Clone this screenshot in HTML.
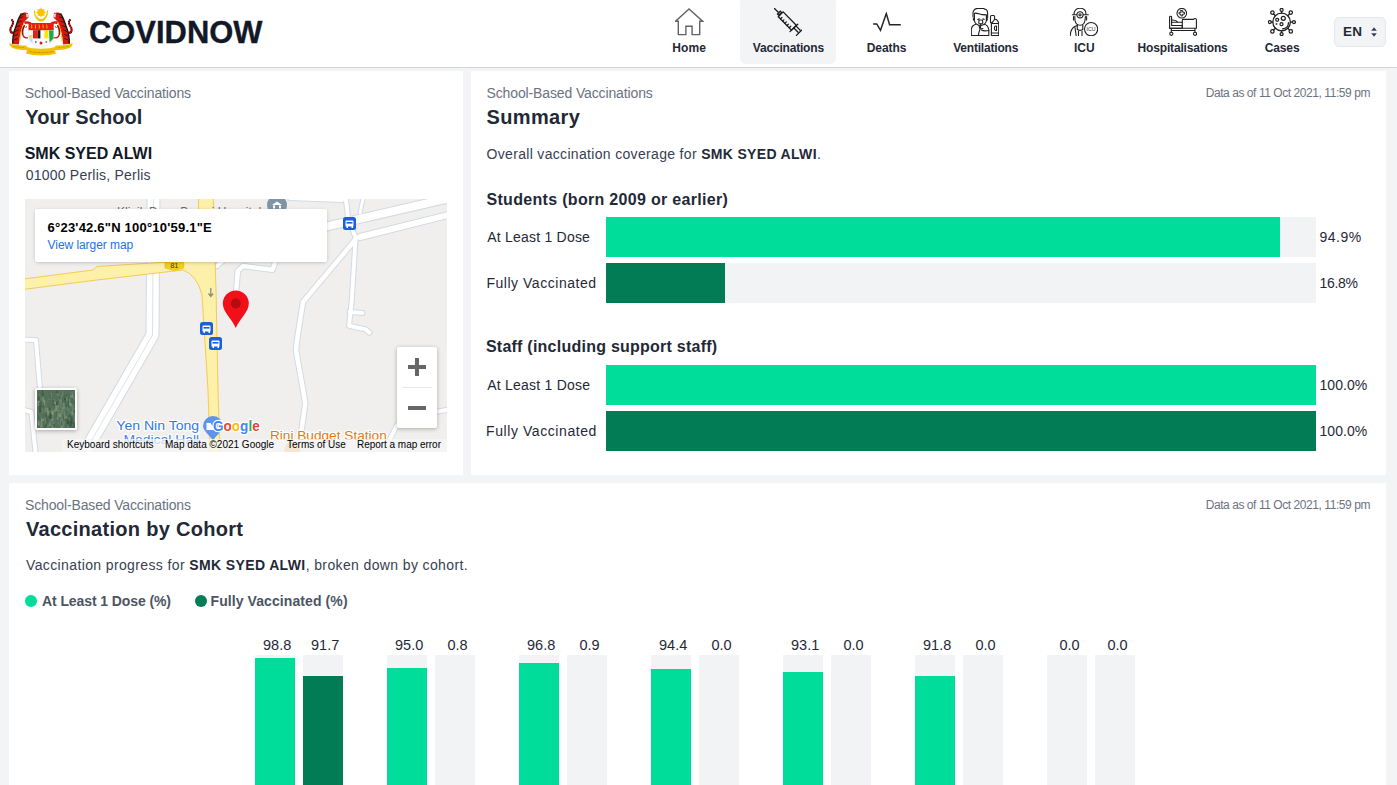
<!DOCTYPE html>
<html><head><meta charset="utf-8"><title>COVIDNOW</title>
<style>
html,body{margin:0;padding:0;width:1397px;height:785px;overflow:hidden;background:#f3f4f6;font-family:"Liberation Sans",sans-serif;}
.t{position:absolute;line-height:1;white-space:nowrap;}
.a{position:absolute;}
.g1{background:#00dd9b}
.g2{background:#027c55}
.tr{background:#f2f3f5}
</style></head><body>
<div class="a" style="left:0;top:0;width:1397px;height:67px;background:#fff"></div>
<div class="a" style="left:0;top:67px;width:1397px;height:1px;background:#d1d5db"></div>
<div class="a" style="left:740px;top:-3px;width:96px;height:67px;background:#f3f4f6;border-radius:6px"></div>
<div class="a" style="left:1334px;top:17px;width:50px;height:28px;border:1px solid #e5e7eb;background:#f3f4f6;border-radius:5px"></div>
<svg class="a" style="left:1370px;top:26px" width="8" height="12" viewBox="0 0 8 12"><path d="M1.2 4.8 L4 1.2 L6.8 4.8Z M1.2 7.2 L4 10.8 L6.8 7.2Z" fill="#374151"/></svg>
<svg class="a" style="left:5px;top:5px" width="75" height="55" viewBox="5 5 75 55">
<defs>
<g id="tg">
<path d="M11.5,19.5 C13.8,21.5 13.5,23.5 11.8,26 C10,28.5 10,31 11.5,32.8 L14,32.4" fill="none" stroke="#e01a12" stroke-width="2"/>
<path d="M11.5,19.5 C13.8,21.5 13.5,23.5 11.8,26 C10,28.5 10,31 11.5,32.8 L14,32.4" fill="none" stroke="#1a1a1a" stroke-width="2" stroke-dasharray="0.9 1.3"/>
<path d="M12.7,43.7 C12.5,38 14,31 16,26 C17.5,21.5 19.5,16 21.5,13.5 C23,12.3 26,12.2 28,13 L28.5,17.5 L26.5,19.5 L24,22 C22.5,26 20.5,32 19.8,37 C19.5,40 19.2,42 18.8,44.5 Z" fill="#d9170f"/>
<path d="M12.7,43.7 C12.5,38 14,31 16,26 C17.5,21.5 19.5,16 21.5,13.5" fill="none" stroke="#1a1a1a" stroke-width="1.4"/>
<path d="M14,40 L17.5,38.5 M14.2,36 L18,34 M15,31.5 L18.8,29.8 M16.2,27 L20,25.5 M17.8,22.5 L21.5,21 M19.5,18 L23,16.8 M21.5,14.5 L24.5,13.8" stroke="#1a1a1a" stroke-width="0.9"/>
<path d="M26,13.5 L28.3,14 L28.3,17 L26.5,17.5 Z" fill="#d9d9d9"/>
<path d="M19.8,41 C20.3,34 22,27.5 24.3,22.5" fill="none" stroke="#f5c400" stroke-width="1"/>
<path d="M24,21.5 C26,21 29,21.3 31.5,22.8 L31,24.5 C29,23.6 27,23.5 25,24.2 Z" fill="#e01a12"/>
<path d="M24.8,25.5 C23,28 22.4,32 23,35 C23.6,37.3 25.6,38.2 28,37.6" fill="none" stroke="#e01a12" stroke-width="1.3"/>
<path d="M24.5,25 C22.5,28 21.8,32 22.5,35 M25.5,27.5 L27,26.5" fill="none" stroke="#1a1a1a" stroke-width="0.8"/>
</g>
</defs>
<use href="#tg"/>
<use href="#tg" transform="translate(82,0) scale(-1,1)"/>
<!-- crescent & sun -->
<path d="M33.8,10.5 A7.2,11 0 0 0 48.2,10.5 L47,10.5 A6,8.6 0 0 1 35,10.5 Z" fill="#f2c200"/>
<circle cx="41" cy="12.5" r="3.8" fill="#f7c600"/>
<g stroke="#f7c600" stroke-width="0.8">
<path d="M41,7.5 V17.5 M36,12.5 H46 M37.5,9 L44.5,16 M44.5,9 L37.5,16"/>
</g>
<!-- shield -->
<path d="M28.5,30 H53.7 V38.5 L51,43 L41,47.5 L31,43 L28.5,38.5 Z" fill="#fbfbfb" stroke="#dcdcdc" stroke-width="0.4"/>
<rect x="28.5" y="23" width="25.2" height="7.2" fill="#f01a14"/>
<g fill="#e8b800"><path d="M31,23.5 l1.2,2 v3 h-1 v-3z M34.8,23.5 l1.2,2 v3 h-1 v-3z M38.6,23.5 l1.2,2 v3 h-1 v-3z M42.4,23.5 l1.2,2 v3 h-1 v-3z M46.2,23.5 l1.2,2 v3 h-1 v-3z"/></g>
<rect x="33" y="30.2" width="4.6" height="8.2" fill="#f01a14"/>
<rect x="37.6" y="30.2" width="2.8" height="8.2" fill="#1b1b1b"/>
<rect x="44.4" y="30.2" width="4" height="8.2" fill="#ffe500"/>
<path d="M49,30.5 H53.5 V38.5 L49.5,42.5 Z" fill="#1ea84a"/>
<path d="M29,35 H32.5 V38 H29 Z" fill="#f2dc40"/>
<path d="M29,38.3 H32.5 V43 L30,40.5 Z" fill="#bcdcf2"/>
<circle cx="41" cy="43" r="1.5" fill="#e01818"/>
<circle cx="35.8" cy="42" r="0.9" fill="#3a7ad0"/>
<circle cx="46.3" cy="42" r="0.9" fill="#8a7a5a"/>
<!-- ribbon -->
<path d="M9,43 C13,44.5 20,46 26.5,45.5 L27.5,50 C20,50.5 13,49 10.5,46.5 Z" fill="#f2c200"/>
<path d="M73,43 C69,44.5 62,46 55.5,45.5 L54.5,50 C62,50.5 69,49 71.5,46.5 Z" fill="#f2c200"/>
<path d="M25.5,46.5 C27,49 27,51 26,53.5 C33,56 49,56 56,53.5 C55,51 55,49 56.5,46.5 C49,49.5 33,49.5 25.5,46.5 Z" fill="#f2c200"/>
<path d="M29,51.5 C36,53 46,53 53,51.5" stroke="#8a6d00" stroke-width="0.6" stroke-dasharray="0.8 0.5" fill="none"/>
<path d="M13,46 C16,47 20,47.5 24,47.5 M69,46 C66,47 62,47.5 58,47.5" stroke="#8a6d00" stroke-width="0.5" stroke-dasharray="0.8 0.5" fill="none"/>
</svg>

<div class="t" style="left:89.3px;top:15.9px;font-size:32px;font-weight:700;color:#111827;transform:scaleX(0.966);transform-origin:0 0;-webkit-text-stroke:0.35px #111827">COVIDNOW</div>
<svg class="a" style="left:675px;top:8px" width="29" height="28" viewBox="675 8 29 28" fill="none" stroke="#636363" stroke-width="1.4" stroke-linejoin="miter">
<path d="M689,9 L675.6,21.2 L678.3,21.2 L678.3,34.6 L685.9,34.6 L685.9,26.3 L692.1,26.3 L692.1,34.6 L699.7,34.6 L699.7,21.2 L702.6,21.2 Z"/>
</svg>
<svg class="a" style="left:774px;top:8px" width="28" height="28" viewBox="0 0 28 28" fill="none" stroke="#1a1a1a" stroke-width="1.3" stroke-linecap="round">
<path d="M0.3,0.3 L4.3,4.3"/>
<path d="M3.5,6 L6.3,3.2 L7.6,4.5 L4.8,7.3 Z"/>
<path d="M9.1,3.9 L4.3,8.7 L17.4,22.1 L22.3,17.3 Z"/>
<path d="M16,23.6 L23.8,16.2"/>
<path d="M19.8,20 L24.1,24.3 M21.9,17.9 L26.2,22.2"/>
<path d="M22.4,27.4 L27.6,22.2"/>
<path d="M6.5,10.9 L7.9,9.5 M8.7,13.1 L9.9,11.9 M10.9,15.3 L12.3,13.9 M13.1,17.5 L14.3,16.3 M15.3,19.7 L16.7,18.3"/>
</svg>
<svg class="a" style="left:872px;top:12px" width="30" height="20" viewBox="872 12 30 20" fill="none" stroke="#262626" stroke-width="1.5" stroke-linejoin="miter">
<path d="M873.1,23.9 L876.7,23.9 L880.5,30.3 L886.3,13.6 L889.6,24.8 L900.8,24.8"/>
</svg>
<svg class="a" style="left:971px;top:8px" width="28" height="28" viewBox="0 0 28 28" fill="none" stroke="#1f1f1f" stroke-width="1.1" stroke-linecap="round" stroke-linejoin="round">
<path d="M2,9 L2,4.5 C2.5,2 4,0.4 7,0.4 L12.3,0.3 C13,0.6 13.5,1 14.3,1.2 C16,1.6 16.6,3 16.6,5 L16.6,9.5"/>
<path d="M3.4,9.5 L3.4,5.3 C6,4.5 8,6.5 11,6.6 L15.4,6.9 L15.4,12 C15.4,15 13,17.5 9.4,17.5 C6,17.5 3.4,15 3.4,12 Z"/>
<path d="M3.4,10 C2,10 2,12.5 3.4,12.5 M15.4,10 C16.8,10 16.8,12.5 15.4,12.5"/>
<path d="M6.8,11.5 L8.2,10.8 M12,10.8 L13.2,11.5"/><path d="M8,12 L11.5,12 L11.8,15.3 C11.8,16 7.8,16 7.8,15.3 Z" fill="#fff"/><path d="M9.8,16 L9.5,20"/>
<path d="M5,16.2 C2,17 0.3,19 0.3,22 L0.3,27.6 L17.8,27.6 L17.8,21.5 C17,18 15,16.5 13.5,16.2"/>
<path d="M8,17.5 L9,21 L12,20.5 M9,21 C8,24 7.5,26 7.3,27.6"/>
<path d="M10.5,22 C12,23 15,23 17.8,22.5"/>
<path d="M20.4,14.6 L20.4,27.2 C20.4,27.5 20.7,27.6 21,27.6 L27.1,27.6 C27.4,27.6 27.7,27.5 27.7,27.2 L27.7,14.6 L25.5,11.5 L23.5,11.5 L21.2,14.6"/>
<path d="M19.5,14.6 L19.5,8.5 C19.5,7.8 20,7.5 20.6,7.5 L22.6,7.5 C23.2,7.5 23.6,7.8 23.6,8.5 L23.6,11.5"/>
<path d="M20.4,25 L27.7,25 M21,15.5 L27.2,15.5"/>
<path d="M24.5,18 C23,18.5 23,22 24.5,22.5 M25.5,18 L25.5,22.5"/>
</svg>
<svg class="a" style="left:1070px;top:8px" width="28" height="28" viewBox="0 0 28 28" fill="none" stroke="#1f1f1f" stroke-width="1.1" stroke-linecap="round" stroke-linejoin="round">
<path d="M4,6.4 C4,2.5 6.5,0.3 10,0.3 C13.5,0.3 16,2.5 16,6.4"/>
<path d="M2.3,6.8 L18.3,6.8"/>
<circle cx="10" cy="6.8" r="3.1" fill="#fff"/>
<circle cx="10" cy="6.8" r="1.1"/>
<path d="M4.8,8.5 L5,12.5 C5.5,15.5 7.5,17.2 10,17.2 C12.5,17.2 14.5,15.5 15,12.5 L15.4,8.5"/>
<path d="M3.5,8.5 L3.5,12 M16.6,8.5 L16.6,12"/>
<path d="M7.3,16.5 L7.3,21.5 L10,22.5 L12.8,21.5 L12.8,16.8"/>
<path d="M7.3,17.5 C3.5,18.5 0.3,22 0.3,27.6 M5,19.5 L6.2,27.6 M8.5,23 L8.5,27.6 M12,23 L12,27.6"/>
<circle cx="21.1" cy="21.1" r="6.6" fill="#fff"/>
<text x="21.1" y="23.3" font-family="Liberation Sans" font-size="6" text-anchor="middle" fill="#1f1f1f" stroke="none" textLength="9" lengthAdjust="spacingAndGlyphs">ICU</text>
</svg>
<svg class="a" style="left:1169px;top:8px" width="28" height="28" viewBox="0 0 28 28" fill="none" stroke="#1f1f1f" stroke-width="1.1" stroke-linecap="round" stroke-linejoin="round">
<circle cx="12.8" cy="5.2" r="4.8"/>
<path d="M11.9,2.5 H13.7 V4.3 H15.5 V6.1 H13.7 V7.9 H11.9 V6.1 H10.1 V4.3 H11.9 Z" stroke-width="1"/>
<path d="M0.6,20.3 L0.6,9 C0.6,8.4 1,8.2 1.6,8.2 C2.2,8.2 2.6,8.4 2.6,9 L2.6,17.5 L13.3,17.5 L13.3,20.3 Z"/>
<path d="M2.6,14.3 L13.3,14.3 M2.6,12 C5,11.8 7.5,12.3 9,14.3"/>
<path d="M13.3,20.3 L13.3,12.3 C13.3,11.8 13.8,11.4 14.3,11.4 L24.5,11.4 C25,10.8 25.6,10.5 26.2,10.5 C26.9,10.5 27.4,11 27.4,11.7 L27.4,20.3 L0.6,20.3"/>
<path d="M2.3,20.5 L2.3,24 M26,20.5 L26,24 M2.3,22.5 L26,22.5"/>
<circle cx="2.3" cy="25.8" r="1.6"/>
<circle cx="26" cy="25.8" r="1.6"/>
</svg>
<svg class="a" style="left:1268px;top:8px" width="28" height="28" viewBox="0 0 28 28" fill="none" stroke="#1f1f1f" stroke-width="1.25" stroke-linecap="round" stroke-linejoin="round">
<circle cx="13.6" cy="14" r="8.8"/>
<path d="M13.6,5.2 V3.3 M13.6,22.8 V24.6 M4.8,14 H3.2 M22.4,14 H24.4 M7.4,7.8 L5.6,6 M19.8,7.8 L21.5,6 M7.4,20.2 L5.6,22 M19.8,20.2 L21.5,22"/>
<circle cx="13.6" cy="1.9" r="1.5"/>
<circle cx="13.6" cy="26.1" r="1.5"/>
<circle cx="1.8" cy="14" r="1.5"/>
<circle cx="25.9" cy="14" r="1.5"/>
<circle cx="4.4" cy="4.6" r="1.7"/>
<circle cx="22.8" cy="4.6" r="1.7"/>
<circle cx="4.4" cy="23.4" r="1.7"/>
<circle cx="22.8" cy="23.4" r="1.7"/>
<circle cx="9.2" cy="11.8" r="1.5"/>
<circle cx="15.3" cy="10.3" r="2"/>
<circle cx="13.5" cy="16.2" r="1.5"/>
<path d="M20.5,14.5 C20.5,18 18,20.5 14.5,20.8"/>
<circle cx="8.5" cy="16" r="0.3"/>
</svg>

<div class="a" style="left:9px;top:71px;width:454px;height:404px;background:#fff"></div>
<div class="a" style="left:471px;top:71px;width:915px;height:404px;background:#fff"></div>
<div class="a" style="left:9px;top:483px;width:1377px;height:302px;background:#fff"></div>
<div class="a" style="left:25px;top:199px;width:422px;height:253px;overflow:hidden;background:#f0efed">
<svg class="a" style="left:0;top:0" width="422" height="253" viewBox="0 0 422 253">
<g fill="none" stroke-linecap="round" stroke-linejoin="round">
<!-- white roads outline -->
<g stroke="#d3dae2">
<path d="M128.5,-5 L127.5,136 L57,258" stroke-width="14"/>
<path d="M-5,140.7 L11,141 L15,190" stroke-width="6"/>
<path d="M-5,210 L6.4,213 L11,258" stroke-width="6"/>
<path d="M265,35.9 L427,-1.4" stroke-width="10"/>
<path d="M335,38 L427,15" stroke-width="8"/>
<path d="M320.3,-5 L323,18 L330.6,38.6 L326.8,101 L324,126.7 L341,130.5 L344.4,133.7 M324.5,112.7 L337.4,114" stroke-width="6"/>
<path d="M339,-5 L335,14" stroke-width="5"/>
<path d="M330,41 L278,103 L272,141 L271,151 L280.3,204 L272.8,258" stroke-width="6.5"/>
<path d="M211,95 L212.8,72 L218,67 L247.5,70.8 L251.4,60" stroke-width="6.5"/>
<path d="M192,67 L200,60" stroke-width="6"/>
<path d="M365,240 L372,226 L412,212.6 L427,210" stroke-width="6"/>
<path d="M265,-1 L317,1" stroke-width="6"/>
</g>
<g stroke="#ffffff">
<path d="M128.5,-5 L127.5,136 L57,258" stroke-width="12"/>
<path d="M-5,140.7 L11,141 L15,190" stroke-width="4"/>
<path d="M-5,210 L6.4,213 L11,258" stroke-width="4"/>
<path d="M265,35.9 L427,-1.4" stroke-width="8"/>
<path d="M335,38 L427,15" stroke-width="6"/>
<path d="M320.3,-5 L323,18 L330.6,38.6 L326.8,101 L324,126.7 L341,130.5 L344.4,133.7 M324.5,112.7 L337.4,114" stroke-width="4"/>
<path d="M339,-5 L335,14" stroke-width="3"/>
<path d="M330,41 L278,103 L272,141 L271,151 L280.3,204 L272.8,258" stroke-width="4.5"/>
<path d="M211,95 L212.8,72 L218,67 L247.5,70.8 L251.4,60" stroke-width="4.5"/>
<path d="M192,67 L200,60" stroke-width="4"/>
<path d="M365,240 L372,226 L412,212.6 L427,210" stroke-width="4"/>
<path d="M265,-1 L317,1" stroke-width="4"/>
</g>
<path d="M128.5,-5 L127.5,136 L57,258" stroke="#d3dae2" stroke-width="0.8"/>
</g>
<!-- yellow roads -->
<path d="M-2,80 L68,71 L72,67.5 L150,62.5 L173.5,60 L173.5,-2 L188.3,-2 L190,60 L191,91 L193,191 L195,256 L185,256 L183,191 L177,96 Q172,76 158,71 L72,81 L68,81.5 L-2,90.5 Z" fill="#fdf0a8" stroke="#f3c64a" stroke-width="0.9"/>
<!-- route shield 81 -->
<path d="M140,63 L158.7,63 L158.7,69 L149.3,71.5 L140,69 Z" fill="#f5d01b" stroke="#e3b800" stroke-width="0.6"/>
<text x="149.3" y="69.4" font-family="Liberation Sans" font-size="7.5" text-anchor="middle" fill="#3c3c3c">81</text>
<!-- one-way arrow -->
<path d="M185.8,89 L185.8,97 M183.5,94.5 L185.8,97.5 L188.1,94.5" stroke="#8a8a8a" stroke-width="1.3" fill="none"/>
<!-- POI gray top -->
<circle cx="252" cy="6" r="10" fill="#7f95a6"/><path d="M247,6 L252,2.5 L257,6 Z M248,6.5 h2 v3 h-2z M254,6.5 h2 v3 h-2z" fill="#fff"/>
<text x="92" y="16.8" font-family="Liberation Sans" font-size="12" fill="#5f6d7a">Klinik Desa Beseri Hospital</text>
<!-- bus icons -->
<g>
<rect x="318" y="18" width="13" height="13" rx="2.5" fill="#1a5fe0"/>
<rect x="175" y="123" width="13" height="13" rx="2.5" fill="#1a5fe0"/>
<rect x="184" y="138" width="13" height="13" rx="2.5" fill="#1a5fe0"/>
</g>
<g fill="#fff">
<path d="M321.5,21.5 h6 a1,1 0 0 1 1,1 v5 h-8 v-5 a1,1 0 0 1 1,-1z M321.5,27.5 h1.5 v1.5 h-1.5z M326.5,27.5 h1.5 v1.5 h-1.5z"/>
<path d="M178.5,126.5 h6 a1,1 0 0 1 1,1 v5 h-8 v-5 a1,1 0 0 1 1,-1z M178.5,132.5 h1.5 v1.5 h-1.5z M183.5,132.5 h1.5 v1.5 h-1.5z"/>
<path d="M187.5,141.5 h6 a1,1 0 0 1 1,1 v5 h-8 v-5 a1,1 0 0 1 1,-1z M187.5,147.5 h1.5 v1.5 h-1.5z M192.5,147.5 h1.5 v1.5 h-1.5z"/>
</g>
<g fill="#1a5fe0">
<rect x="321.5" y="23" width="6" height="1.6"/>
<rect x="178.5" y="128" width="6" height="1.6"/>
<rect x="187.5" y="143" width="6" height="1.6"/>
</g>
<!-- red pin -->
<path d="M210.8,129 C207,120 197.8,113 197.8,104.5 A13,13 0 1 1 223.8,104.5 C223.8,113 214.6,120 210.8,129 Z" fill="#f20f1a"/>
<circle cx="210.8" cy="104.5" r="5" fill="#b40c10"/>
<!-- medical POI -->
<path d="M188,242 C185,236 178,232 178,227 A10,10 0 1 1 198,227 C198,232 191,236 188,242 Z" fill="#5c94ee"/>
<path d="M181.5,231 h10 v-4 h-4 l-2,-3 h-4 z" fill="#fff"/>
<!-- orange POI -->
<circle cx="267.4" cy="251" r="8" fill="#f6b35c"/>
<!-- map labels -->
<g font-family="Liberation Sans" font-size="13.5" paint-order="stroke" stroke="#fff" stroke-width="2.5" stroke-linejoin="round">
<text x="91.3" y="231" fill="#3278e8" textLength="82.8" lengthAdjust="spacingAndGlyphs">Yen Nin Tong</text>
<text x="98.4" y="245" fill="#3278e8" opacity="0.9" textLength="75.7" lengthAdjust="spacingAndGlyphs">Medical Hall</text>
<text x="244.9" y="240.5" fill="#e37a12" textLength="116.9" lengthAdjust="spacingAndGlyphs">Rini Budget Station</text>
</g>
<!-- google logo -->
<g font-family="Liberation Sans" font-size="14.5" font-weight="700" paint-order="stroke" stroke="#fff" stroke-width="2.5" stroke-linejoin="round">
<text x="188" y="231.5" textLength="46.7" lengthAdjust="spacingAndGlyphs"><tspan fill="#4285f4">G</tspan><tspan fill="#ea4335">o</tspan><tspan fill="#fbbc05">o</tspan><tspan fill="#4285f4">g</tspan><tspan fill="#34a853">l</tspan><tspan fill="#ea4335">e</tspan></text>
</g>
</svg>
<!-- footer -->
<div class="a" style="left:37px;top:240px;width:385px;height:13px;background:rgba(245,245,245,0.75)"></div>
<!-- zoom control -->
<div class="a" style="left:372px;top:148px;width:40px;height:81px;background:#fff;border-radius:2px;box-shadow:0 1px 4px rgba(0,0,0,0.3)"></div>
<div class="a" style="left:383px;top:166px;width:18px;height:4px;background:#666"></div>
<div class="a" style="left:390px;top:159px;width:4px;height:18px;background:#666"></div>
<div class="a" style="left:377px;top:188px;width:30px;height:1px;background:#e6e6e6"></div>
<div class="a" style="left:383px;top:207px;width:18px;height:4px;background:#666"></div>
<!-- satellite thumb -->
<div class="a" style="left:10px;top:189px;width:38px;height:38px;border:2px solid #fff;border-radius:2px;box-shadow:0 1px 4px rgba(0,0,0,0.3);overflow:hidden"><svg width="38" height="38" viewBox="0 0 38 38" style="display:block"><rect width="38" height="38" fill="#557059"/><rect x="17.2" y="21.3" width="2.8" height="4.1" fill="#35503c" opacity="0.75"/><rect x="32.5" y="7.2" width="2.6" height="4.1" fill="#5b775f" opacity="0.75"/><rect x="3.6" y="11.5" width="1.0" height="6.0" fill="#3e5a45" opacity="0.75"/><rect x="22.6" y="15.1" width="1.8" height="5.6" fill="#5b775f" opacity="0.75"/><rect x="23.7" y="31.6" width="0.9" height="1.7" fill="#6c866d" opacity="0.75"/><rect x="22.8" y="29.6" width="1.5" height="4.8" fill="#6c866d" opacity="0.75"/><rect x="19.7" y="24.3" width="1.9" height="5.1" fill="#8aa087" opacity="0.75"/><rect x="24.9" y="15.5" width="2.0" height="6.6" fill="#4c6a52" opacity="0.75"/><rect x="26.9" y="12.0" width="1.3" height="3.1" fill="#4c6a52" opacity="0.75"/><rect x="21.4" y="4.1" width="1.0" height="3.1" fill="#4c6a52" opacity="0.75"/><rect x="36.4" y="32.2" width="0.8" height="2.7" fill="#3e5a45" opacity="0.75"/><rect x="17.9" y="37.3" width="1.7" height="1.9" fill="#6c866d" opacity="0.75"/><rect x="29.6" y="10.3" width="1.0" height="3.3" fill="#627c63" opacity="0.75"/><rect x="28.8" y="4.5" width="1.3" height="2.1" fill="#3e5a45" opacity="0.75"/><rect x="17.7" y="18.5" width="2.3" height="2.5" fill="#35503c" opacity="0.75"/><rect x="7.2" y="27.8" width="1.1" height="5.0" fill="#4c6a52" opacity="0.75"/><rect x="15.0" y="37.6" width="0.8" height="6.3" fill="#7d957c" opacity="0.75"/><rect x="37.9" y="0.7" width="1.2" height="7.0" fill="#4c6a52" opacity="0.75"/><rect x="1.6" y="5.6" width="1.8" height="1.6" fill="#46624c" opacity="0.75"/><rect x="31.6" y="14.7" width="1.0" height="2.6" fill="#6c866d" opacity="0.75"/><rect x="0.6" y="14.0" width="2.2" height="2.2" fill="#8aa087" opacity="0.75"/><rect x="31.6" y="5.2" width="1.6" height="4.9" fill="#7d957c" opacity="0.75"/><rect x="34.5" y="31.1" width="1.3" height="2.5" fill="#35503c" opacity="0.75"/><rect x="7.5" y="36.1" width="2.7" height="4.8" fill="#627c63" opacity="0.75"/><rect x="1.8" y="4.1" width="1.9" height="2.9" fill="#627c63" opacity="0.75"/><rect x="9.8" y="31.3" width="2.1" height="3.1" fill="#5b775f" opacity="0.75"/><rect x="35.3" y="37.1" width="1.1" height="4.1" fill="#4c6a52" opacity="0.75"/><rect x="10.6" y="34.9" width="1.2" height="1.6" fill="#7d957c" opacity="0.75"/><rect x="15.6" y="9.5" width="0.9" height="3.1" fill="#35503c" opacity="0.75"/><rect x="21.7" y="5.0" width="1.6" height="6.4" fill="#46624c" opacity="0.75"/><rect x="25.0" y="26.3" width="2.1" height="2.3" fill="#3e5a45" opacity="0.75"/><rect x="35.1" y="18.0" width="1.6" height="3.2" fill="#3e5a45" opacity="0.75"/><rect x="0.8" y="24.2" width="1.9" height="5.5" fill="#46624c" opacity="0.75"/><rect x="5.2" y="2.8" width="1.8" height="3.5" fill="#3e5a45" opacity="0.75"/><rect x="34.2" y="28.0" width="2.3" height="5.9" fill="#46624c" opacity="0.75"/><rect x="13.4" y="26.0" width="2.8" height="6.3" fill="#627c63" opacity="0.75"/><rect x="35.9" y="1.2" width="1.9" height="1.6" fill="#627c63" opacity="0.75"/><rect x="14.4" y="0.5" width="1.0" height="2.0" fill="#4c6a52" opacity="0.75"/><rect x="37.7" y="33.4" width="2.4" height="3.6" fill="#8aa087" opacity="0.75"/><rect x="16.7" y="31.9" width="1.0" height="5.6" fill="#3e5a45" opacity="0.75"/><rect x="11.8" y="3.3" width="0.8" height="6.8" fill="#4c6a52" opacity="0.75"/><rect x="18.9" y="23.4" width="2.8" height="2.9" fill="#3e5a45" opacity="0.75"/><rect x="14.0" y="5.4" width="2.1" height="4.4" fill="#46624c" opacity="0.75"/><rect x="25.1" y="16.8" width="2.8" height="3.3" fill="#7d957c" opacity="0.75"/><rect x="7.5" y="16.4" width="2.6" height="6.5" fill="#6c866d" opacity="0.75"/><rect x="14.6" y="22.2" width="1.5" height="2.2" fill="#8aa087" opacity="0.75"/><rect x="13.3" y="34.0" width="0.9" height="1.9" fill="#7d957c" opacity="0.75"/><rect x="31.2" y="4.3" width="1.8" height="6.6" fill="#627c63" opacity="0.75"/><rect x="14.5" y="19.8" width="2.3" height="5.4" fill="#8aa087" opacity="0.75"/><rect x="12.2" y="31.5" width="1.4" height="4.8" fill="#7d957c" opacity="0.75"/><rect x="21.7" y="11.7" width="2.5" height="1.6" fill="#5b775f" opacity="0.75"/><rect x="15.4" y="7.2" width="2.5" height="3.0" fill="#5b775f" opacity="0.75"/><rect x="30.3" y="37.4" width="1.1" height="2.1" fill="#35503c" opacity="0.75"/><rect x="24.9" y="30.7" width="2.9" height="5.3" fill="#6c866d" opacity="0.75"/><rect x="31.3" y="9.7" width="2.4" height="5.7" fill="#35503c" opacity="0.75"/><rect x="27.1" y="6.8" width="1.4" height="3.4" fill="#35503c" opacity="0.75"/><rect x="19.0" y="37.9" width="1.2" height="6.2" fill="#6c866d" opacity="0.75"/><rect x="3.3" y="35.4" width="2.4" height="2.2" fill="#8aa087" opacity="0.75"/><rect x="7.5" y="33.7" width="0.8" height="4.5" fill="#35503c" opacity="0.75"/><rect x="30.3" y="35.9" width="1.8" height="5.1" fill="#6c866d" opacity="0.75"/><rect x="3.8" y="32.9" width="2.6" height="6.6" fill="#4c6a52" opacity="0.75"/><rect x="8.1" y="34.2" width="3.0" height="6.9" fill="#35503c" opacity="0.75"/><rect x="37.1" y="35.4" width="1.4" height="5.5" fill="#3e5a45" opacity="0.75"/><rect x="13.2" y="3.1" width="1.8" height="4.5" fill="#7d957c" opacity="0.75"/><rect x="18.5" y="1.1" width="2.6" height="1.9" fill="#3e5a45" opacity="0.75"/><rect x="6.6" y="12.7" width="2.5" height="2.3" fill="#5b775f" opacity="0.75"/><rect x="38.0" y="34.2" width="1.9" height="5.2" fill="#8aa087" opacity="0.75"/><rect x="35.9" y="18.7" width="2.9" height="2.0" fill="#6c866d" opacity="0.75"/><rect x="16.7" y="21.2" width="2.6" height="4.6" fill="#5b775f" opacity="0.75"/><rect x="19.9" y="32.1" width="2.0" height="3.2" fill="#627c63" opacity="0.75"/><rect x="36.3" y="33.1" width="2.1" height="3.2" fill="#5b775f" opacity="0.75"/><rect x="36.8" y="19.9" width="2.1" height="2.6" fill="#35503c" opacity="0.75"/><rect x="4.3" y="0.2" width="1.6" height="4.5" fill="#3e5a45" opacity="0.75"/><rect x="19.6" y="15.2" width="2.6" height="4.6" fill="#8aa087" opacity="0.75"/><rect x="3.5" y="6.3" width="2.8" height="4.0" fill="#627c63" opacity="0.75"/><rect x="10.2" y="18.0" width="1.1" height="3.9" fill="#8aa087" opacity="0.75"/><rect x="19.9" y="4.1" width="1.7" height="1.7" fill="#7d957c" opacity="0.75"/><rect x="4.9" y="29.6" width="0.9" height="2.6" fill="#6c866d" opacity="0.75"/><rect x="0.4" y="10.8" width="2.4" height="2.8" fill="#8aa087" opacity="0.75"/><rect x="4.0" y="27.8" width="1.1" height="4.3" fill="#7d957c" opacity="0.75"/><rect x="27.3" y="26.7" width="2.7" height="1.6" fill="#627c63" opacity="0.75"/><rect x="31.4" y="23.4" width="2.0" height="6.3" fill="#35503c" opacity="0.75"/><rect x="24.3" y="20.1" width="2.7" height="4.9" fill="#5b775f" opacity="0.75"/><rect x="8.8" y="28.1" width="2.6" height="6.5" fill="#46624c" opacity="0.75"/><rect x="22.9" y="33.8" width="1.2" height="5.8" fill="#6c866d" opacity="0.75"/><rect x="33.7" y="5.1" width="1.3" height="5.5" fill="#7d957c" opacity="0.75"/><rect x="14.7" y="16.5" width="2.9" height="4.5" fill="#5b775f" opacity="0.75"/><rect x="7.6" y="23.9" width="2.6" height="2.0" fill="#46624c" opacity="0.75"/><rect x="34.6" y="36.8" width="1.1" height="4.3" fill="#46624c" opacity="0.75"/><rect x="19.1" y="26.1" width="1.2" height="1.9" fill="#4c6a52" opacity="0.75"/><rect x="0.9" y="29.0" width="2.1" height="6.5" fill="#8aa087" opacity="0.75"/><rect x="5.6" y="7.0" width="1.2" height="6.1" fill="#7d957c" opacity="0.75"/><rect x="35.2" y="3.6" width="0.9" height="6.7" fill="#8aa087" opacity="0.75"/><rect x="2.9" y="3.7" width="1.7" height="3.8" fill="#46624c" opacity="0.75"/><rect x="16.3" y="22.8" width="0.8" height="5.4" fill="#6c866d" opacity="0.75"/><rect x="6.9" y="17.3" width="2.4" height="3.7" fill="#6c866d" opacity="0.75"/><rect x="23.0" y="3.6" width="2.5" height="3.3" fill="#4c6a52" opacity="0.75"/><rect x="30.5" y="26.8" width="2.7" height="5.0" fill="#627c63" opacity="0.75"/><rect x="21.6" y="7.3" width="2.1" height="3.4" fill="#7d957c" opacity="0.75"/><rect x="10.6" y="4.4" width="2.4" height="2.4" fill="#627c63" opacity="0.75"/><rect x="5.1" y="12.5" width="2.0" height="3.5" fill="#627c63" opacity="0.75"/><rect x="29.1" y="15.4" width="2.4" height="1.9" fill="#46624c" opacity="0.75"/><rect x="11.5" y="3.8" width="2.8" height="6.9" fill="#3e5a45" opacity="0.75"/><rect x="8.8" y="35.9" width="2.3" height="3.4" fill="#627c63" opacity="0.75"/><rect x="21.6" y="20.3" width="1.7" height="7.0" fill="#6c866d" opacity="0.75"/><rect x="26.6" y="28.9" width="3.0" height="1.6" fill="#4c6a52" opacity="0.75"/><rect x="28.1" y="9.8" width="1.7" height="1.8" fill="#6c866d" opacity="0.75"/><rect x="24.6" y="0.4" width="1.4" height="3.0" fill="#46624c" opacity="0.75"/><rect x="20.9" y="19.3" width="2.9" height="4.6" fill="#4c6a52" opacity="0.75"/><rect x="24.2" y="30.8" width="1.0" height="4.8" fill="#3e5a45" opacity="0.75"/><rect x="14.7" y="35.7" width="1.6" height="6.8" fill="#8aa087" opacity="0.75"/><rect x="20.6" y="22.7" width="1.7" height="4.2" fill="#7d957c" opacity="0.75"/><rect x="20.0" y="22.7" width="1.6" height="3.1" fill="#7d957c" opacity="0.75"/><rect x="21.3" y="10.8" width="2.4" height="3.1" fill="#3e5a45" opacity="0.75"/><rect x="29.4" y="22.3" width="2.2" height="3.7" fill="#627c63" opacity="0.75"/><rect x="2.0" y="12.0" width="1.7" height="4.7" fill="#46624c" opacity="0.75"/><rect x="2.8" y="34.4" width="1.7" height="4.1" fill="#6c866d" opacity="0.75"/><rect x="1.7" y="3.7" width="2.6" height="6.5" fill="#5b775f" opacity="0.75"/><rect x="37.2" y="31.0" width="2.1" height="2.1" fill="#627c63" opacity="0.75"/><rect x="17.3" y="7.7" width="0.9" height="4.4" fill="#4c6a52" opacity="0.75"/><rect x="13.8" y="5.3" width="1.7" height="4.8" fill="#627c63" opacity="0.75"/><rect x="13.8" y="28.3" width="2.6" height="2.3" fill="#7d957c" opacity="0.75"/><rect x="27.9" y="9.1" width="1.1" height="6.4" fill="#35503c" opacity="0.75"/><rect x="23.7" y="13.6" width="1.4" height="5.3" fill="#6c866d" opacity="0.75"/><rect x="24.1" y="28.6" width="1.2" height="2.9" fill="#6c866d" opacity="0.75"/><rect x="33.4" y="1.5" width="0.9" height="3.0" fill="#627c63" opacity="0.75"/><rect x="1.0" y="1.4" width="1.3" height="3.0" fill="#4c6a52" opacity="0.75"/><rect x="34.7" y="6.1" width="1.3" height="6.9" fill="#8aa087" opacity="0.75"/><rect x="18.2" y="8.0" width="1.6" height="5.6" fill="#4c6a52" opacity="0.75"/><rect x="30.5" y="17.0" width="2.6" height="6.1" fill="#6c866d" opacity="0.75"/><rect x="16.9" y="28.4" width="1.7" height="2.3" fill="#5b775f" opacity="0.75"/><rect x="24.8" y="37.6" width="1.5" height="4.5" fill="#5b775f" opacity="0.75"/><rect x="16.3" y="14.0" width="1.0" height="6.3" fill="#4c6a52" opacity="0.75"/><rect x="20.7" y="16.4" width="2.0" height="6.0" fill="#8aa087" opacity="0.75"/><rect x="11.4" y="29.5" width="1.0" height="2.7" fill="#4c6a52" opacity="0.75"/><rect x="26.4" y="18.8" width="2.5" height="3.3" fill="#5b775f" opacity="0.75"/><rect x="8.3" y="25.0" width="1.5" height="6.5" fill="#46624c" opacity="0.75"/><rect x="27.0" y="21.6" width="2.8" height="6.7" fill="#7d957c" opacity="0.75"/><rect x="16.6" y="30.5" width="1.5" height="3.2" fill="#627c63" opacity="0.75"/><rect x="36.8" y="27.7" width="1.9" height="2.0" fill="#46624c" opacity="0.75"/><rect x="0.9" y="25.7" width="2.1" height="5.9" fill="#46624c" opacity="0.75"/><rect x="30.3" y="20.5" width="2.6" height="4.6" fill="#5b775f" opacity="0.75"/><rect x="3.4" y="17.3" width="2.7" height="6.0" fill="#6c866d" opacity="0.75"/><rect x="19.6" y="20.7" width="2.0" height="6.8" fill="#627c63" opacity="0.75"/><rect x="2.4" y="20.8" width="2.5" height="2.0" fill="#4c6a52" opacity="0.75"/><rect x="10.4" y="4.0" width="1.5" height="1.6" fill="#5b775f" opacity="0.75"/><rect x="3.7" y="31.0" width="1.7" height="5.4" fill="#8aa087" opacity="0.75"/><rect x="29.1" y="19.8" width="2.5" height="3.7" fill="#46624c" opacity="0.75"/><rect x="30.7" y="12.7" width="1.1" height="4.2" fill="#4c6a52" opacity="0.75"/><rect x="26.9" y="34.8" width="1.7" height="6.0" fill="#46624c" opacity="0.75"/><rect x="32.4" y="30.6" width="2.6" height="6.4" fill="#35503c" opacity="0.75"/><rect x="24.3" y="19.9" width="2.4" height="5.9" fill="#627c63" opacity="0.75"/><rect x="35.1" y="34.8" width="1.3" height="2.4" fill="#627c63" opacity="0.75"/><rect x="26.0" y="12.2" width="1.7" height="4.4" fill="#7d957c" opacity="0.75"/><rect x="36.9" y="2.2" width="1.5" height="2.1" fill="#5b775f" opacity="0.75"/><rect x="29.5" y="6.8" width="0.9" height="4.0" fill="#8aa087" opacity="0.75"/><rect x="34.6" y="1.4" width="1.0" height="2.5" fill="#6c866d" opacity="0.75"/><rect x="22.4" y="22.8" width="1.8" height="4.3" fill="#8aa087" opacity="0.75"/><rect x="7.0" y="10.7" width="1.2" height="5.7" fill="#7d957c" opacity="0.75"/><rect x="23.8" y="35.8" width="2.0" height="6.2" fill="#8aa087" opacity="0.75"/><rect x="33.7" y="34.7" width="1.6" height="4.5" fill="#4c6a52" opacity="0.75"/><rect x="18.3" y="8.4" width="0.9" height="6.7" fill="#627c63" opacity="0.75"/><rect x="37.1" y="30.2" width="2.5" height="5.8" fill="#3e5a45" opacity="0.75"/><rect x="25.0" y="9.0" width="0.8" height="4.1" fill="#46624c" opacity="0.75"/><rect x="17.1" y="9.4" width="1.7" height="6.3" fill="#627c63" opacity="0.75"/><rect x="6.0" y="12.2" width="1.4" height="6.3" fill="#35503c" opacity="0.75"/><rect x="5.0" y="28.2" width="2.2" height="4.3" fill="#3e5a45" opacity="0.75"/><rect x="5.7" y="29.3" width="0.8" height="6.0" fill="#5b775f" opacity="0.75"/><rect x="31.2" y="3.1" width="1.4" height="5.4" fill="#4c6a52" opacity="0.75"/><rect x="33.8" y="26.4" width="1.0" height="5.6" fill="#35503c" opacity="0.75"/><rect x="32.6" y="11.5" width="2.5" height="3.8" fill="#4c6a52" opacity="0.75"/><rect x="29.7" y="16.7" width="0.9" height="3.8" fill="#8aa087" opacity="0.75"/><rect x="6.0" y="31.6" width="1.5" height="3.2" fill="#4c6a52" opacity="0.75"/><rect x="21.1" y="37.9" width="2.3" height="1.9" fill="#4c6a52" opacity="0.75"/><rect x="26.1" y="4.0" width="1.7" height="4.0" fill="#4c6a52" opacity="0.75"/><rect x="24.8" y="0.5" width="1.6" height="5.4" fill="#6c866d" opacity="0.75"/><rect x="11.2" y="4.3" width="2.5" height="6.2" fill="#6c866d" opacity="0.75"/><rect x="34.3" y="5.8" width="2.2" height="6.7" fill="#7d957c" opacity="0.75"/><rect x="36.3" y="28.7" width="2.0" height="2.0" fill="#6c866d" opacity="0.75"/><rect x="7.6" y="27.8" width="1.5" height="6.7" fill="#8aa087" opacity="0.75"/><rect x="27.5" y="12.6" width="2.6" height="2.0" fill="#5b775f" opacity="0.75"/><rect x="23.6" y="5.0" width="2.2" height="2.5" fill="#6c866d" opacity="0.75"/><rect x="15.3" y="31.8" width="2.1" height="2.0" fill="#6c866d" opacity="0.75"/><rect x="1.2" y="37.5" width="1.8" height="5.7" fill="#46624c" opacity="0.75"/><rect x="35.0" y="16.2" width="1.9" height="5.1" fill="#5b775f" opacity="0.75"/><rect x="31.2" y="14.7" width="1.5" height="3.8" fill="#3e5a45" opacity="0.75"/><rect x="27.6" y="23.3" width="1.5" height="5.8" fill="#6c866d" opacity="0.75"/><rect x="25.1" y="23.1" width="0.8" height="3.3" fill="#46624c" opacity="0.75"/><rect x="11.7" y="16.8" width="2.0" height="2.6" fill="#46624c" opacity="0.75"/><rect x="30.0" y="31.4" width="2.1" height="2.4" fill="#35503c" opacity="0.75"/><rect x="34.3" y="20.8" width="1.6" height="4.3" fill="#5b775f" opacity="0.75"/><rect x="21.8" y="7.5" width="2.9" height="7.0" fill="#6c866d" opacity="0.75"/><rect x="21.6" y="1.0" width="2.3" height="5.8" fill="#5b775f" opacity="0.75"/><rect x="9.3" y="21.9" width="2.3" height="3.3" fill="#46624c" opacity="0.75"/><rect x="10.1" y="33.6" width="1.8" height="5.5" fill="#6c866d" opacity="0.75"/><rect x="34.4" y="20.7" width="2.0" height="4.6" fill="#7d957c" opacity="0.75"/><rect x="6.4" y="28.3" width="2.8" height="3.3" fill="#5b775f" opacity="0.75"/><rect x="4.7" y="31.3" width="1.4" height="6.4" fill="#6c866d" opacity="0.75"/><rect x="28.8" y="13.8" width="1.2" height="4.8" fill="#4c6a52" opacity="0.75"/><rect x="17.3" y="15.3" width="2.5" height="6.6" fill="#5b775f" opacity="0.75"/><rect x="11.7" y="25.5" width="2.4" height="3.6" fill="#3e5a45" opacity="0.75"/><rect x="6.0" y="15.7" width="0.9" height="4.4" fill="#4c6a52" opacity="0.75"/><rect x="21.6" y="6.6" width="1.9" height="3.0" fill="#46624c" opacity="0.75"/><rect x="2.0" y="29.8" width="2.4" height="5.8" fill="#627c63" opacity="0.75"/><rect x="36.5" y="22.8" width="1.8" height="3.8" fill="#627c63" opacity="0.75"/><rect x="28.6" y="18.5" width="3.0" height="6.1" fill="#627c63" opacity="0.75"/><rect x="31.4" y="4.5" width="1.1" height="6.7" fill="#46624c" opacity="0.75"/><rect x="20.0" y="16.4" width="2.8" height="3.3" fill="#3e5a45" opacity="0.75"/><rect x="11.2" y="23.4" width="1.8" height="3.6" fill="#46624c" opacity="0.75"/><rect x="28.6" y="11.6" width="2.1" height="1.9" fill="#4c6a52" opacity="0.75"/><rect x="32.1" y="9.2" width="2.7" height="6.8" fill="#8aa087" opacity="0.75"/><rect x="26.4" y="20.0" width="1.3" height="3.2" fill="#627c63" opacity="0.75"/><rect x="35.7" y="33.4" width="3.0" height="5.5" fill="#46624c" opacity="0.75"/><rect x="32.9" y="16.0" width="2.6" height="2.7" fill="#627c63" opacity="0.75"/><rect x="21.5" y="34.3" width="1.0" height="5.9" fill="#4c6a52" opacity="0.75"/><rect x="33.5" y="21.9" width="1.8" height="3.1" fill="#7d957c" opacity="0.75"/><rect x="0.9" y="6.5" width="1.8" height="4.0" fill="#35503c" opacity="0.75"/><rect x="15.1" y="13.5" width="2.1" height="1.8" fill="#3e5a45" opacity="0.75"/><rect x="17.3" y="11.9" width="1.5" height="2.3" fill="#8aa087" opacity="0.75"/><rect x="33.4" y="7.7" width="2.7" height="5.3" fill="#3e5a45" opacity="0.75"/><rect x="7.4" y="31.8" width="1.6" height="4.1" fill="#5b775f" opacity="0.75"/><rect x="24.1" y="26.5" width="2.0" height="4.4" fill="#6c866d" opacity="0.75"/><rect x="7.3" y="33.4" width="0.9" height="2.1" fill="#46624c" opacity="0.75"/><rect x="36.5" y="10.4" width="1.7" height="6.3" fill="#46624c" opacity="0.75"/><rect x="26.4" y="35.6" width="1.8" height="1.9" fill="#6c866d" opacity="0.75"/><rect x="32.7" y="4.6" width="2.3" height="3.0" fill="#6c866d" opacity="0.75"/><rect x="19.1" y="11.2" width="1.4" height="5.9" fill="#35503c" opacity="0.75"/><rect x="33.6" y="22.4" width="1.3" height="3.2" fill="#5b775f" opacity="0.75"/><rect x="25.3" y="10.5" width="2.2" height="2.0" fill="#4c6a52" opacity="0.75"/><rect x="16.7" y="20.1" width="2.0" height="1.7" fill="#7d957c" opacity="0.75"/><rect x="20.4" y="16.1" width="2.1" height="2.4" fill="#6c866d" opacity="0.75"/><rect x="9.3" y="10.6" width="2.0" height="2.5" fill="#5b775f" opacity="0.75"/><rect x="37.5" y="1.3" width="1.8" height="5.6" fill="#627c63" opacity="0.75"/><rect x="0.1" y="33.9" width="0.9" height="1.9" fill="#46624c" opacity="0.75"/><rect x="12.2" y="18.4" width="0.9" height="3.1" fill="#35503c" opacity="0.75"/><rect x="28.3" y="20.2" width="2.1" height="5.7" fill="#4c6a52" opacity="0.75"/><rect x="23.1" y="8.9" width="1.8" height="5.8" fill="#6c866d" opacity="0.75"/><rect x="9.9" y="20.7" width="2.7" height="4.8" fill="#7d957c" opacity="0.75"/><rect x="1.3" y="22.7" width="2.4" height="4.6" fill="#5b775f" opacity="0.75"/><rect x="12.4" y="23.1" width="2.1" height="5.9" fill="#35503c" opacity="0.75"/><rect x="16.8" y="10.0" width="2.6" height="1.9" fill="#5b775f" opacity="0.75"/><rect x="21.6" y="20.6" width="2.5" height="2.8" fill="#5b775f" opacity="0.75"/><rect x="2.1" y="16.2" width="2.3" height="6.0" fill="#35503c" opacity="0.75"/><rect x="29.7" y="29.1" width="1.9" height="5.1" fill="#35503c" opacity="0.75"/><rect x="6.5" y="9.7" width="1.2" height="5.3" fill="#8aa087" opacity="0.75"/><rect x="2.3" y="15.6" width="1.6" height="2.7" fill="#3e5a45" opacity="0.75"/><rect x="4.9" y="28.7" width="2.1" height="2.2" fill="#8aa087" opacity="0.75"/><rect x="19.8" y="37.5" width="0.8" height="3.8" fill="#35503c" opacity="0.75"/><rect x="5.4" y="14.9" width="1.5" height="3.8" fill="#4c6a52" opacity="0.75"/><rect x="36.9" y="25.8" width="2.4" height="6.9" fill="#6c866d" opacity="0.75"/><rect x="11.2" y="4.5" width="2.7" height="3.8" fill="#4c6a52" opacity="0.75"/><rect x="35.4" y="13.8" width="1.5" height="6.9" fill="#6c866d" opacity="0.75"/><rect x="1.5" y="15.3" width="2.2" height="1.8" fill="#46624c" opacity="0.75"/><rect x="21.6" y="34.7" width="2.7" height="6.6" fill="#5b775f" opacity="0.75"/><rect x="17.6" y="14.9" width="2.7" height="3.6" fill="#3e5a45" opacity="0.75"/><rect x="8.2" y="13.2" width="1.2" height="4.5" fill="#5b775f" opacity="0.75"/><rect x="18.2" y="15.2" width="2.1" height="5.7" fill="#8aa087" opacity="0.75"/><rect x="17.0" y="37.7" width="2.3" height="6.2" fill="#6c866d" opacity="0.75"/><rect x="20.5" y="15.9" width="0.9" height="3.0" fill="#7d957c" opacity="0.75"/><rect x="23.6" y="19.7" width="2.4" height="4.3" fill="#6c866d" opacity="0.75"/></svg></div>
<!-- info box -->
<div class="a" style="left:10px;top:10px;width:292px;height:53px;background:#fff;border-radius:2px;box-shadow:0 1px 4px -1px rgba(0,0,0,0.3)"></div>
</div>

<div class="a tr" style="left:606px;top:217px;width:710px;height:40px"><div class="g1" style="width:94.9%;height:100%"></div></div>
<div class="a tr" style="left:606px;top:263px;width:710px;height:40px"><div class="g2" style="width:16.8%;height:100%"></div></div>
<div class="a tr" style="left:606px;top:365px;width:710px;height:40px"><div class="g1" style="width:100%;height:100%"></div></div>
<div class="a tr" style="left:606px;top:411px;width:710px;height:40px"><div class="g2" style="width:100%;height:100%"></div></div>
<div class="a g1" style="left:25px;top:595px;width:12px;height:12px;border-radius:6px"></div>
<div class="a g2" style="left:195px;top:595px;width:12px;height:12px;border-radius:6px"></div>
<div class="a tr" style="left:255px;top:655px;width:40px;height:250px"><div class="a g1" style="left:0;bottom:0;width:40px;height:247.00px"></div></div>
<div class="a tr" style="left:303px;top:655px;width:40px;height:250px"><div class="a g2" style="left:0;bottom:0;width:40px;height:229.25px"></div></div>
<div class="a tr" style="left:387px;top:655px;width:40px;height:250px"><div class="a g1" style="left:0;bottom:0;width:40px;height:237.50px"></div></div>
<div class="a tr" style="left:435px;top:655px;width:40px;height:250px"><div class="a g2" style="left:0;bottom:0;width:40px;height:2.00px"></div></div>
<div class="a tr" style="left:519px;top:655px;width:40px;height:250px"><div class="a g1" style="left:0;bottom:0;width:40px;height:242.00px"></div></div>
<div class="a tr" style="left:567px;top:655px;width:40px;height:250px"><div class="a g2" style="left:0;bottom:0;width:40px;height:2.25px"></div></div>
<div class="a tr" style="left:651px;top:655px;width:40px;height:250px"><div class="a g1" style="left:0;bottom:0;width:40px;height:236.00px"></div></div>
<div class="a tr" style="left:699px;top:655px;width:40px;height:250px"><div class="a g2" style="left:0;bottom:0;width:40px;height:0.00px"></div></div>
<div class="a tr" style="left:783px;top:655px;width:40px;height:250px"><div class="a g1" style="left:0;bottom:0;width:40px;height:232.75px"></div></div>
<div class="a tr" style="left:831px;top:655px;width:40px;height:250px"><div class="a g2" style="left:0;bottom:0;width:40px;height:0.00px"></div></div>
<div class="a tr" style="left:915px;top:655px;width:40px;height:250px"><div class="a g1" style="left:0;bottom:0;width:40px;height:229.50px"></div></div>
<div class="a tr" style="left:963px;top:655px;width:40px;height:250px"><div class="a g2" style="left:0;bottom:0;width:40px;height:0.00px"></div></div>
<div class="a tr" style="left:1047px;top:655px;width:40px;height:250px"><div class="a g1" style="left:0;bottom:0;width:40px;height:0.00px"></div></div>
<div class="a tr" style="left:1095px;top:655px;width:40px;height:250px"><div class="a g2" style="left:0;bottom:0;width:40px;height:0.00px"></div></div>

<div class="t" style="left:672.20px;top:41.54px;font-size:12px;font-weight:700;color:#1f2937;letter-spacing:0.167px">Home</div>
<div class="t" style="left:752.80px;top:41.54px;font-size:12px;font-weight:700;color:#1f2937;letter-spacing:-0.191px">Vaccinations</div>
<div class="t" style="left:866.70px;top:41.54px;font-size:12px;font-weight:700;color:#1f2937;letter-spacing:-0.060px">Deaths</div>
<div class="t" style="left:953.20px;top:41.54px;font-size:12px;font-weight:700;color:#1f2937;letter-spacing:-0.200px">Ventilations</div>
<div class="t" style="left:1074.00px;top:41.54px;font-size:12px;font-weight:700;color:#1f2937;letter-spacing:0.000px">ICU</div>
<div class="t" style="left:1137.60px;top:41.54px;font-size:12px;font-weight:700;color:#1f2937;letter-spacing:-0.167px">Hospitalisations</div>
<div class="t" style="left:1264.70px;top:41.54px;font-size:12px;font-weight:700;color:#1f2937;letter-spacing:-0.125px">Cases</div>
<div class="t" style="left:1342.90px;top:24.71px;font-size:13.5px;font-weight:700;color:#1f2937;letter-spacing:0.300px">EN</div>
<div class="t" style="left:24.80px;top:85.83px;font-size:14px;font-weight:400;color:#6b7280;letter-spacing:-0.129px">School-Based Vaccinations</div>
<div class="t" style="left:25.20px;top:106.80px;font-size:20px;font-weight:700;color:#1f2937;letter-spacing:0.090px">Your School</div>
<div class="t" style="left:24.70px;top:145.92px;font-size:16px;font-weight:700;color:#111827;letter-spacing:-0.000px">SMK SYED ALWI</div>
<div class="t" style="left:25.70px;top:167.83px;font-size:14px;font-weight:400;color:#374151;letter-spacing:0.226px">01000 Perlis, Perlis</div>
<div class="t" style="left:486.50px;top:85.83px;font-size:14px;font-weight:400;color:#6b7280;letter-spacing:-0.129px">School-Based Vaccinations</div>
<div class="t" style="left:1205.70px;top:86.74px;font-size:12px;font-weight:400;color:#6b7280;letter-spacing:-0.439px">Data as of 11 Oct 2021, 11:59 pm</div>
<div class="t" style="left:486.50px;top:106.90px;font-size:20px;font-weight:700;color:#1f2937;letter-spacing:0.367px">Summary</div>
<div class="t" style="left:486.50px;top:146.83px;font-size:14px;font-weight:400;color:#374151;letter-spacing:0.326px">Overall vaccination coverage for <b style='color:#1f2937'>SMK SYED ALWI</b>.</div>
<div class="t" style="left:486.50px;top:192.22px;font-size:16px;font-weight:700;color:#1f2937;letter-spacing:0.310px">Students (born 2009 or earlier)</div>
<div class="t" style="left:487.30px;top:229.83px;font-size:14px;font-weight:400;color:#1f2937;letter-spacing:0.214px">At Least 1 Dose</div>
<div class="t" style="left:486.40px;top:275.83px;font-size:14px;font-weight:400;color:#1f2937;letter-spacing:0.533px">Fully Vaccinated</div>
<div class="t" style="left:1319.60px;top:229.83px;font-size:14px;font-weight:400;color:#1f2937;letter-spacing:0.475px">94.9%</div>
<div class="t" style="left:1319.60px;top:275.83px;font-size:14px;font-weight:400;color:#1f2937;letter-spacing:-0.350px">16.8%</div>
<div class="t" style="left:485.90px;top:339.12px;font-size:16px;font-weight:700;color:#1f2937;letter-spacing:0.243px">Staff (including support staff)</div>
<div class="t" style="left:487.20px;top:377.83px;font-size:14px;font-weight:400;color:#1f2937;letter-spacing:0.236px">At Least 1 Dose</div>
<div class="t" style="left:486.00px;top:423.83px;font-size:14px;font-weight:400;color:#1f2937;letter-spacing:0.580px">Fully Vaccinated</div>
<div class="t" style="left:1319.50px;top:377.83px;font-size:14px;font-weight:400;color:#1f2937;letter-spacing:0.060px">100.0%</div>
<div class="t" style="left:1319.50px;top:423.83px;font-size:14px;font-weight:400;color:#1f2937;letter-spacing:0.060px">100.0%</div>
<div class="t" style="left:25.00px;top:498.13px;font-size:14px;font-weight:400;color:#6b7280;letter-spacing:-0.142px">School-Based Vaccinations</div>
<div class="t" style="left:1205.70px;top:498.74px;font-size:12px;font-weight:400;color:#6b7280;letter-spacing:-0.439px">Data as of 11 Oct 2021, 11:59 pm</div>
<div class="t" style="left:26.00px;top:518.70px;font-size:20px;font-weight:700;color:#1f2937;letter-spacing:0.290px">Vaccination by Cohort</div>
<div class="t" style="left:26.00px;top:558.23px;font-size:14px;font-weight:400;color:#374151;letter-spacing:0.377px">Vaccination progress for <b style='color:#1f2937'>SMK SYED ALWI</b>, broken down by cohort.</div>
<div class="t" style="left:42.00px;top:593.53px;font-size:14px;font-weight:700;color:#4b5563;letter-spacing:-0.094px">At Least 1 Dose (%)</div>
<div class="t" style="left:210.50px;top:593.53px;font-size:14px;font-weight:700;color:#4b5563;letter-spacing:0.089px">Fully Vaccinated (%)</div>
<div class="t" style="left:263.00px;top:637.55px;font-size:14.5px;font-weight:400;color:#1f2937;letter-spacing:0.000px">98.8</div>
<div class="t" style="left:311.00px;top:637.55px;font-size:14.5px;font-weight:400;color:#1f2937;letter-spacing:0.000px">91.7</div>
<div class="t" style="left:395.00px;top:637.55px;font-size:14.5px;font-weight:400;color:#1f2937;letter-spacing:0.000px">95.0</div>
<div class="t" style="left:447.50px;top:637.55px;font-size:14.5px;font-weight:400;color:#1f2937;letter-spacing:0.000px">0.8</div>
<div class="t" style="left:527.00px;top:637.55px;font-size:14.5px;font-weight:400;color:#1f2937;letter-spacing:0.000px">96.8</div>
<div class="t" style="left:579.50px;top:637.55px;font-size:14.5px;font-weight:400;color:#1f2937;letter-spacing:0.000px">0.9</div>
<div class="t" style="left:659.00px;top:637.55px;font-size:14.5px;font-weight:400;color:#1f2937;letter-spacing:0.000px">94.4</div>
<div class="t" style="left:711.50px;top:637.55px;font-size:14.5px;font-weight:400;color:#1f2937;letter-spacing:0.000px">0.0</div>
<div class="t" style="left:791.00px;top:637.55px;font-size:14.5px;font-weight:400;color:#1f2937;letter-spacing:0.000px">93.1</div>
<div class="t" style="left:843.50px;top:637.55px;font-size:14.5px;font-weight:400;color:#1f2937;letter-spacing:0.000px">0.0</div>
<div class="t" style="left:923.00px;top:637.55px;font-size:14.5px;font-weight:400;color:#1f2937;letter-spacing:0.000px">91.8</div>
<div class="t" style="left:975.50px;top:637.55px;font-size:14.5px;font-weight:400;color:#1f2937;letter-spacing:0.000px">0.0</div>
<div class="t" style="left:1059.50px;top:637.55px;font-size:14.5px;font-weight:400;color:#1f2937;letter-spacing:0.000px">0.0</div>
<div class="t" style="left:1107.50px;top:637.55px;font-size:14.5px;font-weight:400;color:#1f2937;letter-spacing:0.000px">0.0</div>
<div class="t" style="left:47.60px;top:220.59px;font-size:13px;font-weight:700;color:#000000;letter-spacing:0.212px">6°23'42.6"N 100°10'59.1"E</div>
<div class="t" style="left:47.60px;top:238.74px;font-size:12px;font-weight:400;color:#1a73e8;letter-spacing:-0.064px">View larger map</div>
<div class="t" style="left:67.00px;top:439.65px;font-size:10px;font-weight:400;color:#000000;letter-spacing:0.018px">Keyboard shortcuts</div>
<div class="t" style="left:165.00px;top:439.65px;font-size:10px;font-weight:400;color:#000000;letter-spacing:0.000px">Map data ©2021 Google</div>
<div class="t" style="left:287.00px;top:439.65px;font-size:10px;font-weight:400;color:#000000;letter-spacing:0.000px">Terms of Use</div>
<div class="t" style="left:357.00px;top:439.65px;font-size:10px;font-weight:400;color:#000000;letter-spacing:-0.029px">Report a map error</div>
</body></html>
